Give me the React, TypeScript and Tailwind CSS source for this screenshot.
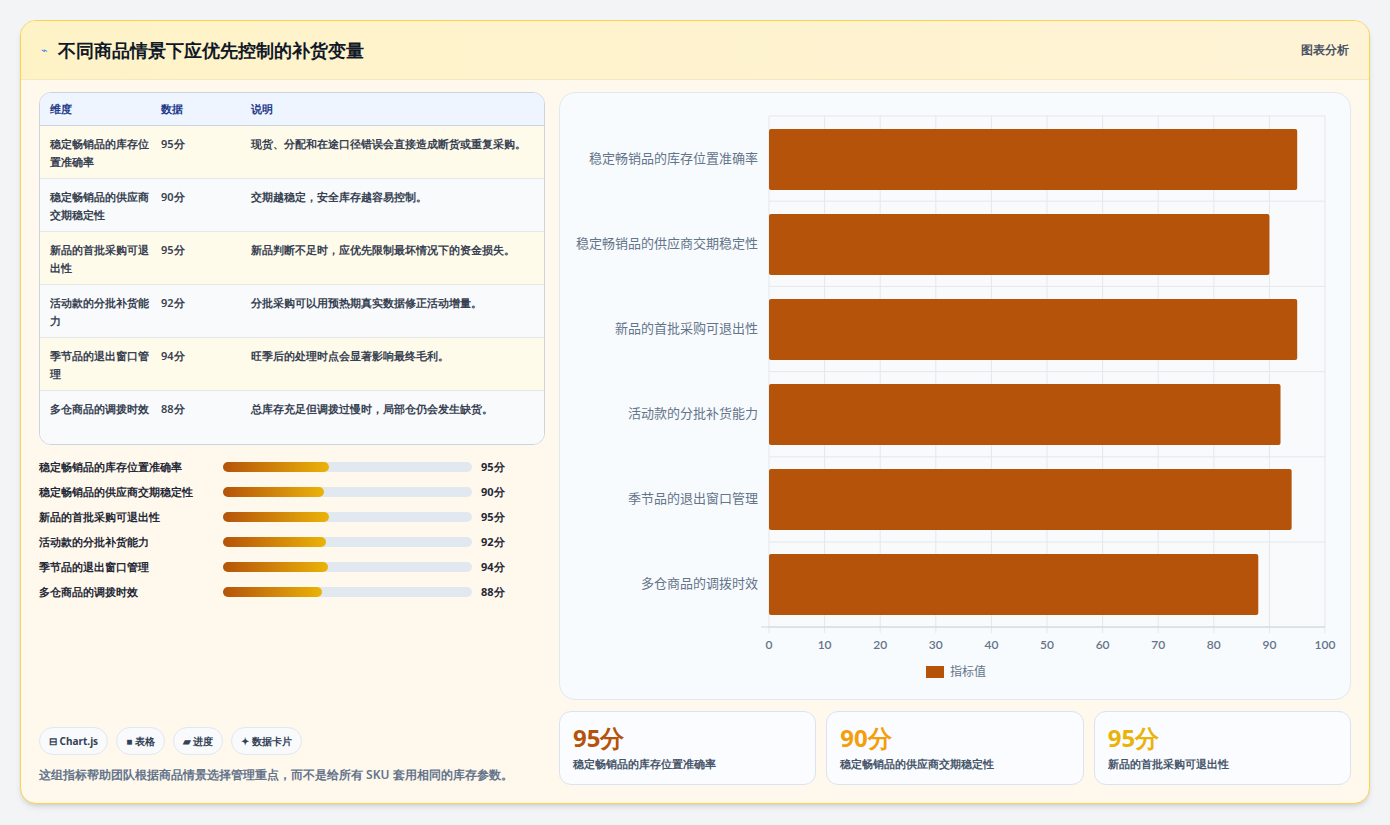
import React from 'react';

const rows = [
  { name: '稳定畅销品的库存位置准确率', v: 95, note: '现货、分配和在途口径错误会直接造成断货或重复采购。' },
  { name: '稳定畅销品的供应商交期稳定性', v: 90, note: '交期越稳定，安全库存越容易控制。' },
  { name: '新品的首批采购可退出性', v: 95, note: '新品判断不足时，应优先限制最坏情况下的资金损失。' },
  { name: '活动款的分批补货能力', v: 92, note: '分批采购可以用预热期真实数据修正活动增量。' },
  { name: '季节品的退出窗口管理', v: 94, note: '旺季后的处理时点会显著影响最终毛利。' },
  { name: '多仓商品的调拨时效', v: 88, note: '总库存充足但调拨过慢时，局部仓仍会发生缺货。' },
];

const Chart: React.FC = () => {
  const x0 = 209, x1 = 765, top = 23, bottom = 534;
  const sx = (v: number) => x0 + (v / 100) * (x1 - x0);
  return (
    <svg width="790" height="606" viewBox="0 0 790 606" className="block">
      <rect x={x0} y={top} width={x1 - x0} height={bottom - top} fill="#f8fafc" />
      {[0, 10, 20, 30, 40, 50, 60, 70, 80, 90, 100].map((t) => (
        <g key={t}>
          <line x1={sx(t)} x2={sx(t)} y1={top} y2={bottom + 6} stroke="#e5e7eb" />
          <text x={sx(t)} y={556} textAnchor="middle" fontSize="12" fontWeight="600" fill="#64748b" fontFamily="Lato, sans-serif">{t}</text>
        </g>
      ))}
      {[0, 1, 2, 3, 4, 5, 6].map((i) => (
        <line key={i} x1={x0} x2={x1} y1={top + i * 85.2} y2={top + i * 85.2} stroke="#e5e7eb" />
      ))}
      <line x1={x0 - 8} x2={x1} y1={bottom} y2={bottom} stroke="#cbd5e1" />
      {rows.map((r, i) => {
        const y = 36 + i * 85;
        return (
          <g key={r.name}>
            <rect x={x0} y={y} width={sx(r.v) - x0} height={61} rx="2" fill="#b45309" />
            <text x={198} y={y + 34} textAnchor="end" fontSize="13" fill="#64748b" fontFamily="'Noto Sans CJK SC', sans-serif">{r.name}</text>
          </g>
        );
      })}
      <rect x={366} y={573} width={18} height={12} fill="#b45309" />
      <text x={390} y={583} fontSize="12" fill="#64748b" fontFamily="'Noto Sans CJK SC', sans-serif">指标值</text>
    </svg>
  );
};

const App: React.FC = () => {
  const cardColors = ['text-[#b45309]', 'text-[#f59e0b]', 'text-[#eab308]'];
  return (
    <div className="w-[1390px] h-[825px] bg-[#f3f4f6] p-5 font-['Noto_Sans_CJK_SC',sans-serif]">
      <div className="h-[784px] rounded-2xl border border-[#fcd34d] bg-[#fff8ec] overflow-hidden shadow-md flex flex-col">
        <div className="h-[60px] px-5 flex items-center justify-between bg-gradient-to-r from-[#fef3c7] to-[#fff3d6] border-b border-[#f6e7bd]">
          <div className="flex items-center gap-2.5">
            <span className="text-[11px] text-[#3b82f6]">⌁</span>
            <h1 className="text-[18px] font-bold text-[#111827]">不同商品情景下应优先控制的补货变量</h1>
          </div>
          <span className="text-[12px] font-bold text-[#4b5563]">图表分析</span>
        </div>
        <div className="flex-1 flex gap-[14px] px-[18px] pt-3 pb-[18px]">
          <div className="w-[506px] flex flex-col">
            <div className="rounded-xl border border-[#cbd5e1] overflow-hidden bg-white">
              <div className="h-[33px] flex items-center bg-[#eef5fe] border-b border-[#cbd5e1] text-[11px] font-bold text-[#1e3a8a]">
                <div className="w-[121px] pl-[10px]">维度</div>
                <div className="w-[90px]">数据</div>
                <div>说明</div>
              </div>
              {rows.map((r, i) => (
                <div key={r.name} className={`h-[53px] flex pt-[9px] text-[11px] leading-[18px] text-[#374151] border-b border-[#e5e7eb] last:border-b-0 ${i % 2 === 0 ? 'bg-[#fffbeb]' : 'bg-[#f8fafc]'}`}>
                  <div className="w-[121px] pl-[10px] pr-3 font-semibold">{r.name}</div>
                  <div className="w-[90px] font-semibold">{r.v}分</div>
                  <div className="flex-1 pr-3 font-semibold">{r.note}</div>
                </div>
              ))}
            </div>
            <div className="mt-[13px] flex flex-col gap-[7px]">
              {rows.map((r) => (
                <div key={r.name} className="h-[18px] flex items-center text-[11px] font-semibold text-[#1f2937]">
                  <div className="w-[184px]">{r.name}</div>
                  <div className="w-[249px] h-[10px] rounded-full bg-[#e2e8f0]">
                    <div className="h-full rounded-full bg-gradient-to-r from-[#b45309] to-[#eab308]" style={{ width: `${r.v * 0.45}%` }} />
                  </div>
                  <div className="ml-[9px] font-bold">{r.v}分</div>
                </div>
              ))}
            </div>
            <div className="mt-auto flex gap-2">
              {['⊟ Chart.js', '■ 表格', '▰ 进度', '✦ 数据卡片'].map((c) => (
                <span key={c} className="h-[28px] px-[9px] flex items-center rounded-full border border-[#e2e8f0] bg-[#f8fafc] text-[10px] font-bold text-[#334155]">{c}</span>
              ))}
            </div>
            <p className="mt-[10px] text-[12px] leading-[20px] font-semibold text-[#64748b]">这组指标帮助团队根据商品情景选择管理重点，而不是给所有 SKU 套用相同的库存参数。</p>
          </div>
          <div className="flex-1 flex flex-col gap-[11px]">
            <div className="h-[608px] rounded-2xl border border-[#e2e8f0] bg-[#f8fbfd] overflow-hidden">
              <Chart />
            </div>
            <div className="flex gap-[10px]">
              {rows.slice(0, 3).map((r, i) => (
                <div key={r.name} className="flex-1 h-[74px] rounded-xl border border-[#dbe4ee] bg-[#fafcff] px-[13px] pt-[11px]">
                  <div className={`text-[24px] leading-[30px] font-bold ${cardColors[i]}`}>{r.v}分</div>
                  <div className="text-[11px] font-semibold text-[#475569] mt-[3px]">{r.name}</div>
                </div>
              ))}
            </div>
          </div>
        </div>
      </div>
    </div>
  );
};

export default App;
